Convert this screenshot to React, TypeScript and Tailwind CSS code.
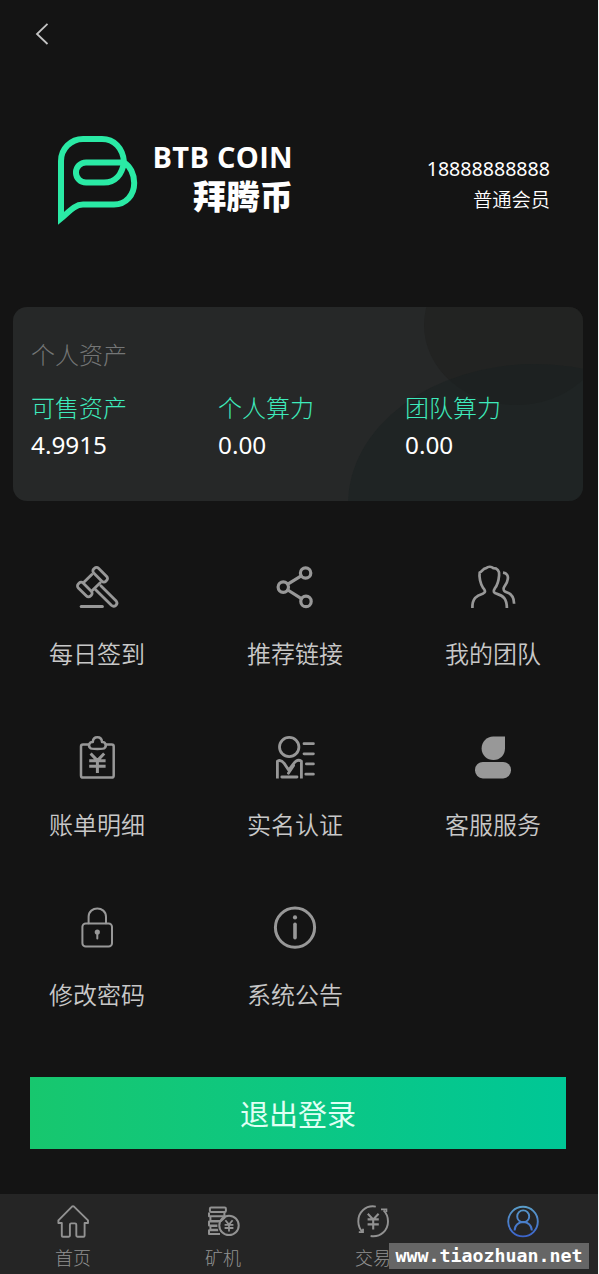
import type { ReactNode } from "react"

const assets = [
    { label: "可售资产", value: "4.9915" },
    { label: "个人算力", value: "0.00" },
    { label: "团队算力", value: "0.00" },
]

function Icon({ children, width = 1.8 }: { children: ReactNode, width?: number }) {
    return (
        <svg
            viewBox="0 0 48 48"
            className="h-12 w-12"
            fill="none"
            stroke="currentColor"
            strokeWidth={width}
            strokeLinecap="round"
            strokeLinejoin="round"
        >
            {children}
        </svg>
    )
}

const menu = [
    {
        label: "每日签到",
        icon: (
            <Icon width={2.8}>
                <rect x="-3.4" y="-8.6" width="6.8" height="17.2" rx="2.8" transform="translate(27.2 11.7) rotate(-45)" />
                <rect x="-3.4" y="-8.6" width="6.8" height="17.2" rx="2.8" transform="translate(11.8 26.6) rotate(-45)" />
                <path d="M18.8 11.4 L11.4 18.8 M27.2 19.8 L19.5 27.3" />
                <path d="M22.4 26.6 L38.4 42.3 C41.4 45 45.6 41.2 43.2 38 L27.8 22.8" />
                <path d="M8.2 43.4 H29.4" strokeWidth="3" />
            </Icon>
        ),
    },
    {
        label: "推荐链接",
        icon: (
            <Icon width={3.2}>
                <circle cx="34.6" cy="10" r="5.2" />
                <circle cx="12.3" cy="24.1" r="5.2" />
                <circle cx="35" cy="38.4" r="5.2" />
                <path d="M16.8 21.2 L30.2 12.8 M16.8 27 L30.4 35.6" />
            </Icon>
        ),
    },
    {
        label: "我的团队",
        icon: (
            <Icon width={2.7}>
                <path d="M3.4 45 C3.1 35.3 7.7 32.5 13.7 30.7 C17.1 29.3 16.3 27.3 14.1 24.9 C11.3 20.9 9.9 13.8 10.7 9.5 C13.1 8.9 13.7 5.3 17.3 5.1 C19.3 3.3 22.5 3.7 24.3 5.1 C28.3 5.1 30.7 7.9 30.1 12.3 C29.7 17.3 28.5 21.9 25.9 25.3 C23.9 28.3 24.3 29.7 28.1 30.9 C34.3 32.9 37.7 35.3 37.9 45" strokeLinecap="butt" />
                <path d="M34 9.7 C37.6 10.1 39.6 12.7 38.7 16.3 C38.2 20.3 36 22.1 34.8 24.7 C34 27.7 35.2 28.5 38.2 29.5 C43.2 31.3 45 34.7 45.1 40.7" strokeLinecap="butt" />
            </Icon>
        ),
    },
    {
        label: "账单明细",
        icon: (
            <Icon width={2.5}>
                <path d="M16 10.4 H10 C8.6 10.4 8 11 8 12.4 V41.4 C8 42.8 8.6 43.5 10 43.5 H38.6 C40.1 43.5 40.7 42.8 40.7 41.4 V12.4 C40.7 11 40.1 10.4 38.7 10.4 H32.8" />
                <path d="M17.4 14.2 C14.8 11.8 16.2 7.8 19.8 8 C20 4.4 21.7 3.3 24.4 3.3 C27.1 3.3 28.8 4.4 29 8 C32.6 7.8 34 11.8 31.4 14.2 C30.7 15.1 18.1 15.1 17.4 14.2 Z" />
                <path d="M17.6 19.5 L24.4 26.6 L31.2 19.5 M16.2 26.8 H32.6 M16.2 32.2 H32.6 M24.4 26.8 V39" strokeWidth="3" strokeLinecap="butt" />
            </Icon>
        ),
    },
    {
        label: "实名认证",
        icon: (
            <Icon width={2.8}>
                <circle cx="18.2" cy="13" r="9.7" />
                <path d="M6.4 44.5 V27.2 C9 25.6 11.4 27 13.2 29.4 L17.6 36 L22.8 29.4 C25 26.4 28 25.6 30.4 27.2 V44.5" strokeLinecap="butt" />
                <path d="M22.6 31.5 L17.4 39.2 M10.8 43 H26 M33 9.7 H42.4 M33 19.8 H42.4 M35.4 29.9 H42.4 M34.8 40.2 H42.4" />
            </Icon>
        ),
    },
    {
        label: "客服服务",
        icon: (
            <Icon>
                <path d="M24.2 2.4 H36 V14.2 C36 21 31 26 24.6 26 C17.8 26 12.6 21 12.6 14.4 C12.6 7.6 17.8 2.4 24.2 2.4 Z" fill="currentColor" stroke="none" />
                <rect x="6" y="28" width="36" height="16.4" rx="7.8" fill="currentColor" stroke="none" />
            </Icon>
        ),
    },
    {
        label: "修改密码",
        icon: (
            <Icon width={2}>
                <rect x="9.4" y="19.4" width="29.6" height="23.2" rx="3.4" />
                <path d="M15.6 19.2 V12.8 C15.6 1.8 33 1.8 33 12.8 V19.2" />
                <circle cx="24.3" cy="28" r="2.6" fill="currentColor" stroke="none" />
                <path d="M24.3 29 V34.5" />
            </Icon>
        ),
    },
    {
        label: "系统公告",
        icon: (
            <Icon width={3}>
                <circle cx="24" cy="23.6" r="19.6" />
                <circle cx="24" cy="13.4" r="2.1" fill="currentColor" stroke="none" />
                <path d="M24 20.2 V33.8" strokeWidth="3.6" />
            </Icon>
        ),
    },
]

const tabs = [
    {
        label: "首页",
        icon: (
            <svg viewBox="0 0 36 36" className="h-9 w-9" fill="none" stroke="currentColor" strokeWidth="1.9" strokeLinejoin="round">
                <path d="M17 3.6 Q18 2.8 19 3.6 L33 17.4 V20 H29.6 V32.4 Q29.6 33.8 28.5 33.8 H22.4 Q21.3 33.8 21.3 32.6 V21.7 Q21.3 20.4 20 20.4 H16.2 Q14.9 20.4 14.9 21.7 V32.6 Q14.9 33.8 13.8 33.8 H7.9 Q6.8 33.8 6.8 32.4 V20 H3.4 V17.4 Z" />
            </svg>
        ),
    },
    {
        label: "矿机",
        icon: (
            <svg viewBox="0 0 36 36" className="h-9 w-9" fill="none" stroke="currentColor" strokeWidth="2" strokeLinejoin="round">
                <rect x="4.9" y="4.6" width="16" height="4.4" rx="1.2" />
                <path d="M19.4 9 V13.2 H4 V9.4 M5.4 13.6 V18 H16 L20.3 14 M13.8 18.5 H4 V22.4 H12.4 M12.4 22.9 H5.4 V26.8 H12.8 M13.2 27.2 H4 V31 H15" />
                <circle cx="24" cy="22.4" r="9.7" />
                <path d="M20.4 17.2 L24 21.6 L27.6 17.2 M19.6 21.8 H28.4 M19.6 25 H28.4 M24 21.6 V28.6" strokeWidth="1.8" />
            </svg>
        ),
    },
    {
        label: "交易",
        icon: (
            <svg viewBox="0 0 36 36" className="h-9 w-9" fill="none" stroke="currentColor" strokeWidth="1.9">
                <path d="M20.8 3.6 C10.4 1.8 3.2 9.6 3.3 18.4 C3.4 22.6 4.7 26 7.4 28.8" />
                <path d="M15.6 33 C26 34.6 33 26.8 33 18.4 C33 13.8 31.4 10.2 28.6 7.4" />
                <path d="M8 25.8 V29.2 H3.8 M26 6.4 L31.4 6.4 V9" strokeWidth="1.8" />
                <path d="M12.8 10.8 L18.2 16.4 L23.6 10.8 M12.6 16.4 H23.8 M12.6 21.4 H23.8 M18.2 16.4 V26.4" strokeWidth="2.1" />
            </svg>
        ),
    },
    {
        // active tab, shown with its icon only
        label: "",
        icon: (
            <svg viewBox="0 0 36 36" className="h-9 w-9" fill="none" stroke="url(#me)" strokeWidth="1.9">
                <defs>
                    <linearGradient id="me" x1="0" y1="2" x2="0" y2="34" gradientUnits="userSpaceOnUse">
                        <stop stopColor="#5b9fc8" />
                        <stop offset="1" stopColor="#3c64cc" />
                    </linearGradient>
                </defs>
                <circle cx="18" cy="18.6" r="14.8" />
                <circle cx="18.2" cy="13.4" r="6" />
                <path d="M9.6 27.6 C9.6 16.2 26.8 16.2 26.8 27.6" />
            </svg>
        ),
    },
]

function Logo() {
    return (
        <div className="flex">
            <svg viewBox="0 0 84 92" className="h-[92px] w-[84px]" fill="none" stroke="#2aeaa5" strokeWidth="6">
                <path d="M5 84.5 V27 A22 22 0 0 1 27 5 H46 C58 5 67 14 68 28 C66 41 59 48.6 48 48.6 H30 A10 10 0 0 1 30 28.5 H68 C74 32 78.2 40 78.2 49 C78.2 61 70 70.5 58 70.5 H27 C18 70.5 12 79 5 84.5 Z" />
            </svg>
            <div className="ml-3 flex w-[141px] flex-col items-end whitespace-nowrap text-white">
                <div className="mt-[5px] h-9 font-['Open_Sans'] text-[29px] leading-9 font-bold tracking-[0.3px]">BTB COIN</div>
                <div className="mt-0.5 h-9 font-['Noto_Sans_CJK_SC'] text-[33.3px] leading-9 font-black">拜腾币</div>
            </div>
        </div>
    )
}

export default function App() {
    return (
        <div className="flex h-[1274px] w-[599px] flex-col overflow-hidden border-r border-[#f4f4f4] bg-[#141414] font-['Noto_Sans','Noto_Sans_CJK_SC',sans-serif]">
            {/* Back */}
            <header className="h-[134px] pt-[22px] pl-[34px]">
                <svg viewBox="0 0 16 24" className="h-6 w-4" fill="none" stroke="#c4c4c4" strokeWidth="1.8">
                    <path d="M13.5 1.8 L3 12 L13.5 22" />
                </svg>
            </header>

            {/* Profile */}
            <section className="flex h-[173px] justify-between pr-12 pl-14">
                <Logo />
                <div className="mt-[19px] text-right text-[19.6px] leading-[31px] text-white">
                    <div>18888888888</div>
                    <div className="font-['Noto_Sans_CJK_SC'] text-[19.3px] font-[350]">普通会员</div>
                </div>
            </section>

            {/* Assets */}
            <section className="relative ml-[13px] h-[194px] w-[570px] overflow-hidden rounded-[14px] bg-[#262828]">
                <div className="absolute -top-[62px] left-[411px] h-40 w-[184px] rounded-[50%] bg-[#1d1d1c]/50" />
                <div className="absolute top-[57px] left-[335px] h-[280px] w-[374px] rounded-[50%] bg-[#182020]/50" />
                <div className="relative px-[18px] pt-[29px]">
                    <h2 className="font-['Noto_Sans_CJK_SC'] text-2xl leading-9 font-light text-[#747676]">个人资产</h2>
                    <div className="mt-[17px] flex">
                        {assets.map((a) => (
                            <div key={a.label} className="w-[187px] shrink-0">
                                <div className="font-['Noto_Sans_CJK_SC'] text-2xl leading-9 font-light text-[#3eebbc]">{a.label}</div>
                                <div className="mt-0.5 text-[24.3px] leading-9 text-white">{a.value}</div>
                            </div>
                        ))}
                    </div>
                </div>
            </section>

            {/* Menu */}
            <nav className="mt-[62px] -ml-0.5 grid h-[514px] w-[594px] grid-cols-3 content-start">
                {menu.map((m) => (
                    <a key={m.label} className="flex h-[170.5px] flex-col items-center text-[#989898]">
                        {m.icon}
                        <span className="mt-6 font-['Noto_Sans_CJK_SC'] text-2xl leading-9 font-[350] text-[#c8c8c8]">{m.label}</span>
                    </a>
                ))}
            </nav>

            <button className="ml-[30px] h-[72px] w-[536px] shrink-0 bg-linear-to-r from-[#17c76e] to-[#00c796] font-['Noto_Sans_CJK_SC'] text-[29px] leading-10 text-[#e0fff4]">
                退出登录
            </button>

            {/* Tab bar */}
            <footer className="relative mt-[45px] h-20 shrink-0 bg-[#252525]">
                <div className="-ml-0.5 grid w-[600px] grid-cols-4">
                    {tabs.map((t, i) => (
                        <a key={i} className="flex flex-col items-center pt-[9px] text-[#929292]">
                            {t.icon}
                            {t.label && <span className="mt-1 font-['Noto_Sans_CJK_SC'] text-lg leading-7 font-light">{t.label}</span>}
                        </a>
                    ))}
                </div>
                <div className="absolute top-[49px] left-[389px] h-[26px] w-[200px] bg-[#666] text-center font-['DejaVu_Sans_Mono',monospace] text-[18.3px] leading-[26px] font-bold text-white">
                    www.tiaozhuan.net
                </div>
            </footer>
        </div>
    )
}
